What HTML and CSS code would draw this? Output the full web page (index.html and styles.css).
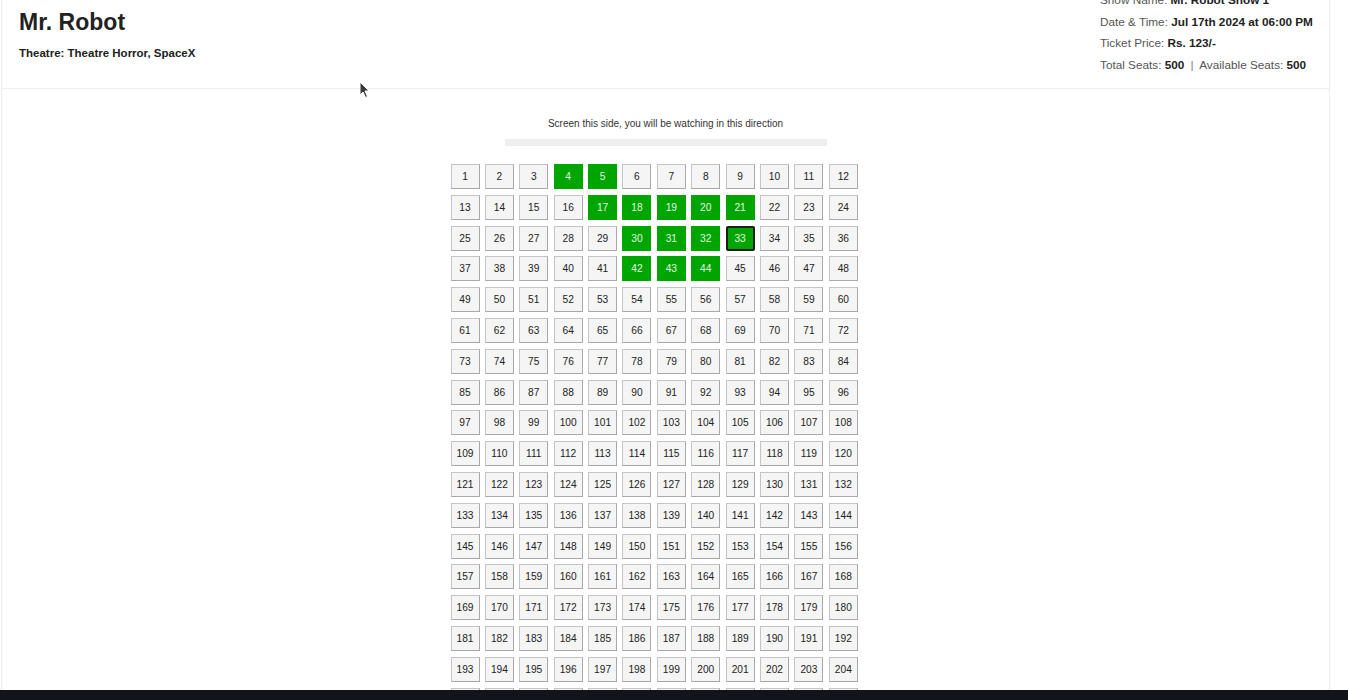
FILE: index.html
```html
<!DOCTYPE html>
<html>
<head>
<meta charset="utf-8">
<link rel="stylesheet" href="styles.css">
</head>
<body>
<div class="viewport">
  <div class="page">
    <div class="card">
      <div class="card-header">
        <div class="title-block">
          <h2 class="movie-title">Mr. Robot</h2>
          <div class="theatre">Theatre: Theatre Horror, SpaceX</div>
        </div>
        <div class="show-info">
          <div class="info-line">Show Name: <b>Mr. Robot Show 1</b></div>
          <div class="info-line">Date &amp; Time: <b>Jul 17th 2024 at 06:00 PM</b></div>
          <div class="info-line">Ticket Price: <b>Rs. 123/-</b></div>
          <div class="info-line">Total Seats: <b>500</b> <span class="sep">|</span> Available Seats: <b>500</b></div>
        </div>
      </div>
      <div class="card-body">
        <div class="screen-label">Screen this side, you will be watching in this direction</div>
        <div class="screen-bar"></div>
        <div class="seat-wrap">
          <div class="seats">
<span class="seat">1</span><span class="seat">2</span><span class="seat">3</span><span class="seat sel">4</span><span class="seat sel">5</span><span class="seat">6</span><span class="seat">7</span><span class="seat">8</span><span class="seat">9</span><span class="seat">10</span><span class="seat">11</span><span class="seat">12</span>
<span class="seat">13</span><span class="seat">14</span><span class="seat">15</span><span class="seat">16</span><span class="seat sel">17</span><span class="seat sel">18</span><span class="seat sel">19</span><span class="seat sel">20</span><span class="seat sel">21</span><span class="seat">22</span><span class="seat">23</span><span class="seat">24</span>
<span class="seat">25</span><span class="seat">26</span><span class="seat">27</span><span class="seat">28</span><span class="seat">29</span><span class="seat sel">30</span><span class="seat sel">31</span><span class="seat sel">32</span><span class="seat sel focus">33</span><span class="seat">34</span><span class="seat">35</span><span class="seat">36</span>
<span class="seat">37</span><span class="seat">38</span><span class="seat">39</span><span class="seat">40</span><span class="seat">41</span><span class="seat sel">42</span><span class="seat sel">43</span><span class="seat sel">44</span><span class="seat">45</span><span class="seat">46</span><span class="seat">47</span><span class="seat">48</span>
<span class="seat">49</span><span class="seat">50</span><span class="seat">51</span><span class="seat">52</span><span class="seat">53</span><span class="seat">54</span><span class="seat">55</span><span class="seat">56</span><span class="seat">57</span><span class="seat">58</span><span class="seat">59</span><span class="seat">60</span>
<span class="seat">61</span><span class="seat">62</span><span class="seat">63</span><span class="seat">64</span><span class="seat">65</span><span class="seat">66</span><span class="seat">67</span><span class="seat">68</span><span class="seat">69</span><span class="seat">70</span><span class="seat">71</span><span class="seat">72</span>
<span class="seat">73</span><span class="seat">74</span><span class="seat">75</span><span class="seat">76</span><span class="seat">77</span><span class="seat">78</span><span class="seat">79</span><span class="seat">80</span><span class="seat">81</span><span class="seat">82</span><span class="seat">83</span><span class="seat">84</span>
<span class="seat">85</span><span class="seat">86</span><span class="seat">87</span><span class="seat">88</span><span class="seat">89</span><span class="seat">90</span><span class="seat">91</span><span class="seat">92</span><span class="seat">93</span><span class="seat">94</span><span class="seat">95</span><span class="seat">96</span>
<span class="seat">97</span><span class="seat">98</span><span class="seat">99</span><span class="seat">100</span><span class="seat">101</span><span class="seat">102</span><span class="seat">103</span><span class="seat">104</span><span class="seat">105</span><span class="seat">106</span><span class="seat">107</span><span class="seat">108</span>
<span class="seat">109</span><span class="seat">110</span><span class="seat">111</span><span class="seat">112</span><span class="seat">113</span><span class="seat">114</span><span class="seat">115</span><span class="seat">116</span><span class="seat">117</span><span class="seat">118</span><span class="seat">119</span><span class="seat">120</span>
<span class="seat">121</span><span class="seat">122</span><span class="seat">123</span><span class="seat">124</span><span class="seat">125</span><span class="seat">126</span><span class="seat">127</span><span class="seat">128</span><span class="seat">129</span><span class="seat">130</span><span class="seat">131</span><span class="seat">132</span>
<span class="seat">133</span><span class="seat">134</span><span class="seat">135</span><span class="seat">136</span><span class="seat">137</span><span class="seat">138</span><span class="seat">139</span><span class="seat">140</span><span class="seat">141</span><span class="seat">142</span><span class="seat">143</span><span class="seat">144</span>
<span class="seat">145</span><span class="seat">146</span><span class="seat">147</span><span class="seat">148</span><span class="seat">149</span><span class="seat">150</span><span class="seat">151</span><span class="seat">152</span><span class="seat">153</span><span class="seat">154</span><span class="seat">155</span><span class="seat">156</span>
<span class="seat">157</span><span class="seat">158</span><span class="seat">159</span><span class="seat">160</span><span class="seat">161</span><span class="seat">162</span><span class="seat">163</span><span class="seat">164</span><span class="seat">165</span><span class="seat">166</span><span class="seat">167</span><span class="seat">168</span>
<span class="seat">169</span><span class="seat">170</span><span class="seat">171</span><span class="seat">172</span><span class="seat">173</span><span class="seat">174</span><span class="seat">175</span><span class="seat">176</span><span class="seat">177</span><span class="seat">178</span><span class="seat">179</span><span class="seat">180</span>
<span class="seat">181</span><span class="seat">182</span><span class="seat">183</span><span class="seat">184</span><span class="seat">185</span><span class="seat">186</span><span class="seat">187</span><span class="seat">188</span><span class="seat">189</span><span class="seat">190</span><span class="seat">191</span><span class="seat">192</span>
<span class="seat">193</span><span class="seat">194</span><span class="seat">195</span><span class="seat">196</span><span class="seat">197</span><span class="seat">198</span><span class="seat">199</span><span class="seat">200</span><span class="seat">201</span><span class="seat">202</span><span class="seat">203</span><span class="seat">204</span>
<span class="seat">205</span><span class="seat">206</span><span class="seat">207</span><span class="seat">208</span><span class="seat">209</span><span class="seat">210</span><span class="seat">211</span><span class="seat">212</span><span class="seat">213</span><span class="seat">214</span><span class="seat">215</span><span class="seat">216</span>
<span class="seat">217</span><span class="seat">218</span><span class="seat">219</span><span class="seat">220</span><span class="seat">221</span><span class="seat">222</span><span class="seat">223</span><span class="seat">224</span><span class="seat">225</span><span class="seat">226</span><span class="seat">227</span><span class="seat">228</span>
          </div>
        </div>
      </div>
    </div>
  </div>
  <svg class="cursor" width="12" height="18" viewBox="0 0 12 18"><path d="M1 1 L1 14 L4 11 L6.5 16.5 L8.5 15.5 L6 10 L10 10 Z" fill="#3a3a3a" stroke="#ffffff" stroke-width="1"/></svg>
</div>
<div class="taskbar"></div>
</body>
</html>
```
FILE: styles.css
```css
html, body {
  margin: 0;
  padding: 0;
  height: 700px;
  overflow: hidden;
  background: #ffffff;
  font-family: "Liberation Sans", Arial, sans-serif;
  color: #222222;
}

.viewport {
  position: relative;
  height: 690px;
  overflow: hidden;
}

.page {
  padding-left: 1px;
  width: 1329px;
}

.card {
  margin-top: -23px;
  border-left: 1px solid #ececec;
  border-right: 1px solid #ececec;
  background: #ffffff;
}

.card-header {
  display: flex;
  justify-content: space-between;
  align-items: flex-start;
  padding: 12px 15px 13px 17px;
  border-bottom: 1px solid #eeeeee;
}

.title-block {
  margin-top: 19px;
}

.movie-title {
  margin: 0;
  font-size: 23px;
  line-height: 28px;
  font-weight: bold;
  color: #222222;
}

.theatre {
  margin-top: 9px;
  font-size: 11.5px;
  line-height: 16px;
  font-weight: bold;
  color: #222222;
}

.show-info {
  width: 214px;
}

.info-line {
  font-size: 11.75px;
  line-height: 21.5px;
  color: #555555;
  white-space: nowrap;
}

.info-line b {
  color: #222222;
}

.sep {
  color: #6c87a8;
  margin: 0 3px;
}

.card-body {
  padding-top: 28px;
}

.screen-label {
  text-align: center;
  font-size: 10px;
  line-height: 14px;
  color: #333333;
}

.screen-bar {
  width: 322px;
  height: 7px;
  margin: 8px auto 0;
  background: #eeeeee;
}

.seat-wrap {
  width: 430px;
  margin: 18px auto 0;
}

.seats {
  display: grid;
  grid-template-columns: repeat(12, 29px);
  column-gap: 5.4px;
  row-gap: 5.8px;
}

.seat {
  box-sizing: border-box;
  height: 25px;
  display: flex;
  align-items: center;
  justify-content: center;
  background: #f5f5f5;
  border: 1px solid #a8a8a8;
  border-top-color: #c4c4c4;
  border-left-color: #c4c4c4;
  font-size: 10.2px;
  color: #222222;
}

.seat.sel {
  background: #00a500;
  border-color: #00a500;
  color: #e4f7e4;
}

.seat.focus {
  border: 2px solid #1e1e1e;
  border-radius: 2px;
}

.cursor {
  position: absolute;
  left: 359px;
  top: 81px;
}

.taskbar {
  height: 10px;
  background: #111418;
}
```
